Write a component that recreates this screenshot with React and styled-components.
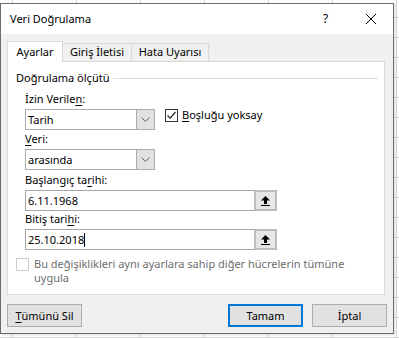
import styled, { createGlobalStyle } from "styled-components";

const GlobalStyle = createGlobalStyle`
    html, body {
        margin: 0;
        padding: 0;
        background: #ffffff;
    }
    body {
        font-family: "Noto Sans", "Open Sans", sans-serif;
        font-size: 11px;
        color: #000;
    }
`;

const Chevron = () => (
    <svg width="9" height="5" viewBox="0 0 9 5">
        <polyline points="0.5,0.5 4.5,4.5 8.5,0.5" fill="none" stroke="#606060" strokeWidth="1" />
    </svg>
);

const RangeIcon = () => (
    <svg width="9" height="10" viewBox="0 0 9 10">
        <polygon points="4.5,0 9,4.5 6,4.5 6,8 3,8 3,4.5 0,4.5" fill="#000" />
        <rect x="0" y="9" width="9" height="1" fill="#000" />
    </svg>
);

const CheckMark = () => (
    <svg width="11" height="11" viewBox="0 0 11 11">
        <polyline points="1.5,5.5 4.2,8.2 9.5,2" fill="none" stroke="#222" strokeWidth="1.2" />
    </svg>
);

const CloseIcon = () => (
    <svg width="10" height="10" viewBox="0 0 10 10">
        <line x1="0" y1="0" x2="10" y2="10" stroke="#000" strokeWidth="1" />
        <line x1="10" y1="0" x2="0" y2="10" stroke="#000" strokeWidth="1" />
    </svg>
);

const Select = ({ value }) => (
    <SelectBox>
        <SelectValue>{value}</SelectValue>
        <SelectArrow><Chevron /></SelectArrow>
    </SelectBox>
);

const RefInput = ({ value, caret }) => (
    <InputBox>
        <InputValue>{value}{caret && <Caret />}</InputValue>
        <RefButton><RangeIcon /></RefButton>
    </InputBox>
);

const App = () => {
    return (
        <>
            <GlobalStyle />
            <Sheet>
                <Dialog>
                    <TitleBar>
                        <Title>Veri Doğrulama</Title>
                        <TitleButton>?</TitleButton>
                        <TitleButton><CloseIcon /></TitleButton>
                    </TitleBar>
                    <Body>
                        <TabStrip>
                            <Tab $active>Ayarlar</Tab>
                            <Tab $width={70}>Giriş İletisi</Tab>
                            <Tab $width={78}>Hata Uyarısı</Tab>
                        </TabStrip>
                        <Panel>
                            <GroupHeader>
                                <span>Doğrulama ölçütü</span>
                                <Rule />
                            </GroupHeader>
                            <Fields>
                                <Label $mt={5}>İzin Verile<Key>n</Key>:</Label>
                                <SelectRow>
                                    <Select value="Tarih" />
                                    <CheckLabel>
                                        <CheckBox><CheckMark /></CheckBox>
                                        <span><Key>B</Key>oşluğu yoksay</span>
                                    </CheckLabel>
                                </SelectRow>
                                <Label $mt={1}><Key>V</Key>eri:</Label>
                                <Select value="arasında" />
                                <Label $mt={2}>Başlangıç ta<Key>r</Key>ihi:</Label>
                                <RefInput value="6.11.1968" />
                                <Label $mt={0}>Bitiş tari<Key>h</Key>i:</Label>
                                <RefInput value="25.10.2018" caret />
                            </Fields>
                            <ApplyRow>
                                <CheckBox $disabled />
                                <ApplyText>
                                    Bu değişiklikleri aynı ayarlara sahip diğer hücrelerin tümüne<br />uygula
                                </ApplyText>
                            </ApplyRow>
                        </Panel>
                        <ButtonRow>
                            <Button><Key>T</Key>ümünü Sil</Button>
                            <Spacer />
                            <Button $default>Tamam</Button>
                            <Button>İptal</Button>
                        </ButtonRow>
                    </Body>
                </Dialog>
            </Sheet>
        </>
    );
};

export default App;

const Sheet = styled.div.withConfig({
    displayName: "Sheet",
})`
    width: 399px;
    height: 338px;
    overflow: hidden;
    box-sizing: border-box;
    padding-top: 3px;
    background-color: #fff;
    background-image:
        linear-gradient(to right, #d4d4d4 1px, transparent 1px),
        linear-gradient(to bottom, #d4d4d4 1px, transparent 1px);
    background-size: 64px 20px;
    background-position: 12px 17px;
  `;
const Dialog = styled.div.withConfig({
    displayName: "Dialog",
})`
    width: 394px;
    height: 331px;
    box-sizing: border-box;
    border: 1px solid #6d6d6d;
    background: #f0f0f0;
    display: flex;
    flex-direction: column;
    box-shadow: 1px 1px 2px rgba(0, 0, 0, 0.15);
  `;
const TitleBar = styled.div.withConfig({
    displayName: "TitleBar",
})`
    height: 30px;
    background: #fff;
    display: flex;
    align-items: center;
    padding-left: 9px;
    padding-bottom: 1px;
    box-sizing: border-box;
    font-size: 12px;
  `;
const Title = styled.div.withConfig({
    displayName: "Title",
})`
    flex: 1;
    line-height: 16px;
    font-size: 11px;
  `;
const TitleButton = styled.div.withConfig({
    displayName: "TitleButton",
})`
    width: 45px;
    height: 29px;
    display: flex;
    align-items: center;
    justify-content: center;
  `;
const Body = styled.div.withConfig({
    displayName: "Body",
})`
    flex: 1;
    padding: 7px 8px 0 6px;
    display: flex;
    flex-direction: column;
  `;
const TabStrip = styled.div.withConfig({
    displayName: "TabStrip",
})`
    display: flex;
    align-items: flex-end;
    height: 20px;
  `;
const Tab = styled.div.withConfig({
    displayName: "Tab",
})`
    box-sizing: border-box;
    width: ${(p) => (p.$width || 56)}px;
    height: ${(p) => (p.$active ? 21 : 18)}px;
    margin-bottom: ${(p) => (p.$active ? -1 : 0)}px;
    margin-left: ${(p) => (p.$active ? 0 : -1)}px;
    border: 1px solid #d9d9d9;
    border-bottom: none;
    background: ${(p) => (p.$active ? "#fff" : "#f0f0f0")};
    position: relative;
    z-index: ${(p) => (p.$active ? 1 : 0)};
    display: flex;
    justify-content: center;
    padding-top: ${(p) => (p.$active ? 2 : 0)}px;
    line-height: 16px;
    &:first-child {
        margin-left: 0;
    }
  `;
const Panel = styled.div.withConfig({
    displayName: "Panel",
})`
    box-sizing: border-box;
    height: 234px;
    border: 1px solid #d9d9d9;
    background: #fff;
    padding: 8px 6px 0 8px;
  `;
const GroupHeader = styled.div.withConfig({
    displayName: "GroupHeader",
})`
    display: flex;
    align-items: center;
    gap: 4px;
    height: 16px;
    line-height: 16px;
  `;
const Rule = styled.div.withConfig({
    displayName: "Rule",
})`
    flex: 1;
    height: 1px;
    background: #dcdcdc;
  `;
const Fields = styled.div.withConfig({
    displayName: "Fields",
})`
    padding-left: 9px;
  `;
const Label = styled.div.withConfig({
    displayName: "Label",
})`
    line-height: 16px;
    height: 16px;
    margin-top: ${(p) => p.$mt}px;
    margin-bottom: 2px;
  `;
const Key = styled.span.withConfig({
    displayName: "Key",
})`
    text-decoration: underline;
    text-underline-offset: 2px;
  `;
const SelectRow = styled.div.withConfig({
    displayName: "SelectRow",
})`
    display: flex;
    align-items: flex-start;
    gap: 10px;
  `;
const SelectBox = styled.div.withConfig({
    displayName: "SelectBox",
})`
    box-sizing: border-box;
    width: 130px;
    height: 21px;
    border: 1px solid #abadb3;
    background: #fff;
    display: flex;
  `;
const SelectValue = styled.div.withConfig({
    displayName: "SelectValue",
})`
    flex: 1;
    padding-left: 2px;
    line-height: 19px;
  `;
const SelectArrow = styled.div.withConfig({
    displayName: "SelectArrow",
})`
    width: 17px;
    background: #e1e1e1;
    border-left: 1px solid #acacac;
    display: flex;
    align-items: center;
    justify-content: center;
  `;
const CheckLabel = styled.label.withConfig({
    displayName: "CheckLabel",
})`
    display: flex;
    align-items: center;
    gap: 4px;
    margin-top: -2px;
    line-height: 16px;
  `;
const CheckBox = styled.div.withConfig({
    displayName: "CheckBox",
})`
    box-sizing: border-box;
    width: 13px;
    height: 13px;
    flex: none;
    border: 1px solid ${(p) => (p.$disabled ? "#cccccc" : "#333333")};
    background: #fff;
    display: flex;
    align-items: center;
    justify-content: center;
  `;
const InputBox = styled.div.withConfig({
    displayName: "InputBox",
})`
    box-sizing: border-box;
    width: 252px;
    height: 21px;
    border: 1px solid #a5a5a5;
    background: #fff;
    display: flex;
  `;
const InputValue = styled.div.withConfig({
    displayName: "InputValue",
})`
    flex: 1;
    padding-left: 2px;
    line-height: 19px;
    display: flex;
    align-items: center;
  `;
const Caret = styled.span.withConfig({
    displayName: "Caret",
})`
    display: inline-block;
    width: 1px;
    height: 14px;
    background: #000;
  `;
const RefButton = styled.div.withConfig({
    displayName: "RefButton",
})`
    box-sizing: border-box;
    width: 23px;
    margin: -1px -1px -1px 0;
    border: 2px solid #bcbcbc;
    background: #e6e6e6;
    display: flex;
    align-items: center;
    justify-content: center;
  `;
const ApplyRow = styled.div.withConfig({
    displayName: "ApplyRow",
})`
    display: flex;
    align-items: flex-start;
    gap: 5px;
    margin-top: 7px;
    color: #6d6d6d;
    & > div:first-child {
        margin-top: 1px;
    }
  `;
const ApplyText = styled.div.withConfig({
    displayName: "ApplyText",
})`
    line-height: 14px;
  `;
const ButtonRow = styled.div.withConfig({
    displayName: "ButtonRow",
})`
    display: flex;
    gap: 9px;
    margin-top: 9px;
    margin-right: -2px;
  `;
const Spacer = styled.div.withConfig({
    displayName: "Spacer",
})`
    flex: 1;
  `;
const Button = styled.div.withConfig({
    displayName: "Button",
})`
    box-sizing: border-box;
    width: 75px;
    height: 23px;
    border: ${(p) => (p.$default ? "2px solid #0078d7" : "1px solid #adadad")};
    background: #e1e1e1;
    display: flex;
    align-items: center;
    justify-content: center;
    line-height: 16px;
  `;
